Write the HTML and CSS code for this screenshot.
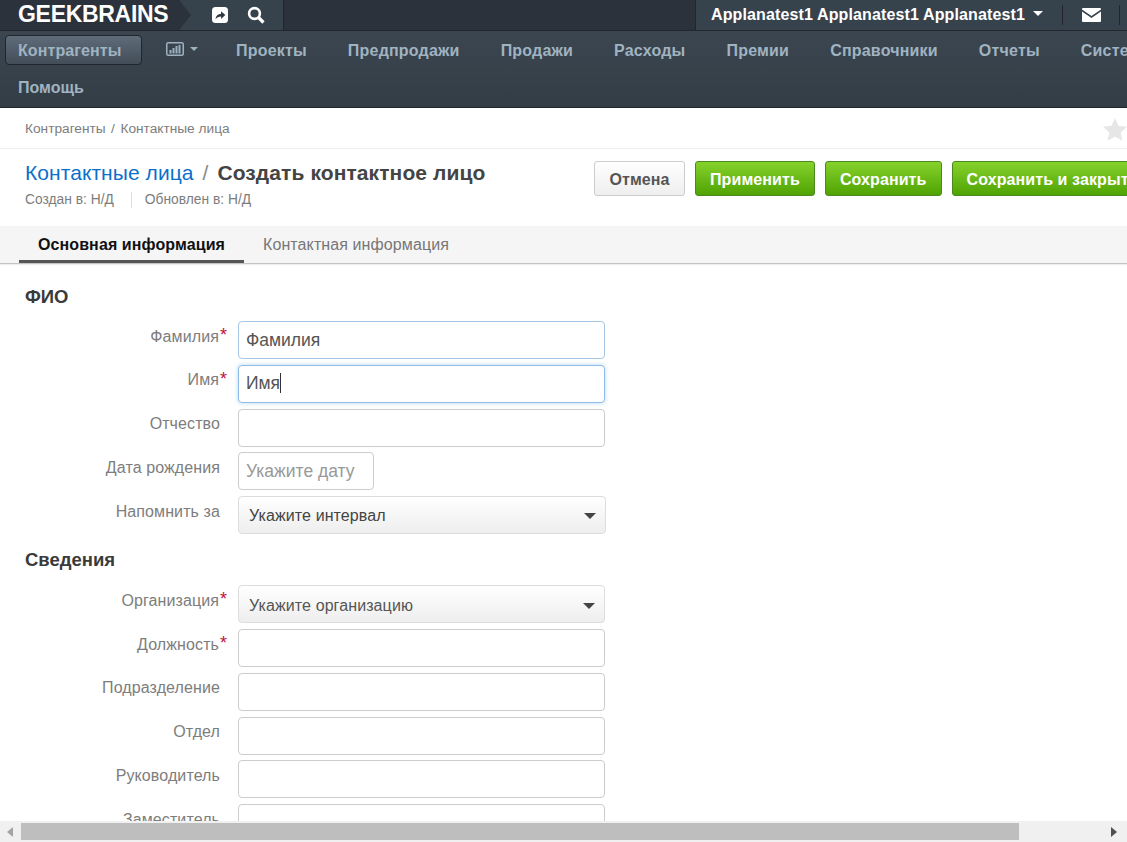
FILE: index.html
```html
<!DOCTYPE html>
<html lang="ru">
<head>
<meta charset="utf-8">
<title>Создать контактное лицо</title>
<link rel="stylesheet" href="styles.css">
</head>
<body>
<div class="viewport">
  <div class="page">
    <header class="topbar">
      <a class="logo">GEEKBRAINS</a>
      <div class="quick">
        <svg class="ico-share" width="18" height="18" viewBox="0 0 18 18"><rect x="1" y="1" width="16" height="16" rx="3.5" fill="#fff"/><path d="M4.5 13.5c.3-3.6 2.4-5.6 5.6-5.7V5.2l4.2 3.9-4.2 3.9v-2.5c-2.4 0-4.100.8-5.600 2.999z" fill="#2e3840"/></svg>
        <svg class="ico-search" width="18" height="18" viewBox="0 0 18 18"><circle cx="7.500" cy="7.500" r="5.400" fill="none" stroke="#fff" stroke-width="2.600"/><path d="M11.500 11.500l5 5" stroke="#fff" stroke-width="3.200"/></svg>
      </div>
      <div class="topgap"></div>
      <div class="user">
        <span class="user-name">Applanatest1 Applanatest1 Applanatest1</span>
        <span class="caret-white"></span>
        <span class="vsep"></span>
        <svg class="ico-mail" width="19" height="14" viewBox="0 0 19 14"><path d="M0 1.500 9.500 8 19 1.500V1q0-1-1-1H1Q0 0 0 1z" fill="#fff"/><path d="M0 3.500V13q0 1 1 1h17q1 0 1-1V3.500L9.500 10z" fill="#fff"/></svg>
        <span class="vsep"></span>
      </div>
    </header>
    <nav class="nav">
      <a class="nav-item active">Контрагенты</a>
      <a class="nav-item chart">
        <svg width="18" height="14" viewBox="0 0 18 14"><rect x=".75" y=".75" width="16.500" height="12.500" rx="1.500" fill="none" stroke="#9db2c1" stroke-width="1.500"/><path d="M3.500 8h2v3.500h-2zM6.500 6h2v5.500h-2zM9.500 4h2v7.500h-2zM12.500 3h2v8.500h-2z" fill="#9db2c1"/></svg>
        <span class="caret-nav"></span>
      </a>
      <a class="nav-item">Проекты</a>
      <a class="nav-item">Предпродажи</a>
      <a class="nav-item">Продажи</a>
      <a class="nav-item">Расходы</a>
      <a class="nav-item">Премии</a>
      <a class="nav-item">Справочники</a>
      <a class="nav-item">Отчеты</a>
      <a class="nav-item">Система</a>
      <a class="nav-item nav-help">Помощь</a>
    </nav>
    <div class="crumbs">
      <span>Контрагенты<span class="crumb-sep">/</span>Контактные лица</span>
      <svg class="star" width="24" height="23" viewBox="0 0 24 23"><path d="M12 0l3.500 7.700 8.500 1-6.300 5.700 1.700 8.400L12 18.600l-7.400 4.200 1.700-8.400L0 8.700l8.500-1z" fill="#e6e6e6"/></svg>
    </div>
    <section class="head">
      <div class="head-text">
        <h1 class="title"><a class="title-link">Контактные лица</a><span class="title-sep">/</span><b class="title-cur">Создать контактное лицо</b></h1>
        <div class="meta"><span class="meta-a">Создан в: Н/Д</span><span class="meta-b">Обновлен в: Н/Д</span></div>
      </div>
      <div class="actions">
        <button class="btn btn-cancel">Отмена</button>
        <button class="btn btn-green">Применить</button>
        <button class="btn btn-green">Сохранить</button>
        <button class="btn btn-green">Сохранить и закрыть</button>
      </div>
    </section>
    <div class="tabs">
      <a class="tab tab-active">Основная информация</a>
      <a class="tab">Контактная информация</a>
    </div>
    <form class="form">
      <h2 class="sec sec-first">ФИО</h2>
      <div class="row"><label class="lbl lbl-req">Фамилия<i class="req">*</i></label><input class="inp inp-focus" value="Фамилия"></div>
      <div class="row"><label class="lbl lbl-req">Имя<i class="req">*</i></label><div class="inp-wrap"><input class="inp inp-active" value="Имя"><span class="text-caret"></span></div></div>
      <div class="row"><label class="lbl">Отчество</label><input class="inp"></div>
      <div class="row"><label class="lbl">Дата рождения</label><input class="inp inp-date" placeholder="Укажите дату"></div>
      <div class="row"><label class="lbl">Напомнить за</label><div class="sel"><span>Укажите интервал</span><i class="sel-caret"></i></div></div>
      <h2 class="sec">Сведения</h2>
      <div class="row"><label class="lbl lbl-req">Организация<i class="req">*</i></label><div class="sel sel-org"><span>Укажите организацию</span><i class="sel-caret"></i></div></div>
      <div class="row"><label class="lbl lbl-req">Должность<i class="req">*</i></label><input class="inp"></div>
      <div class="row"><label class="lbl">Подразделение</label><input class="inp"></div>
      <div class="row"><label class="lbl">Отдел</label><input class="inp"></div>
      <div class="row"><label class="lbl">Руководитель</label><input class="inp"></div>
      <div class="row"><label class="lbl">Заместитель</label><input class="inp"></div>
    </form>
  </div>
</div>
<div class="hscroll">
  <i class="arr arr-l"></i>
  <div class="track"><div class="thumb"></div></div>
  <i class="arr arr-r"></i>
</div>
</body>
</html>
```
FILE: styles.css
```css
* { box-sizing: border-box; }
html, body { margin: 0; height: 100%; overflow: hidden; }
body { display: flex; flex-direction: column; background: #fff; font-family: "Liberation Sans", Arial, sans-serif; color: #444; }
.viewport { flex: 1; min-height: 0; overflow: hidden; }
.page { width: 1225px; }

.topbar { display: flex; height: 31px; background: #2b323b; border-bottom: 1px solid #20262c; }
.logo { position: relative; width: 180px; padding-left: 18px; color: #fff; font-size: 23px; font-weight: 700; line-height: 28px; letter-spacing: -.3px; background: #2b323b; z-index: 1; }
.logo::after { content: ""; position: absolute; right: -11px; top: 0; width: 0; height: 0; border-style: solid; border-width: 15px 0 15px 12px; border-color: transparent transparent transparent #2b323b; }
.quick { width: 104px; display: flex; align-items: center; gap: 18px; padding-left: 31px; background: #36424c; border-right: 1px solid #20262c; }
.topgap { width: 411px; }
.user { flex: 1; display: flex; align-items: center; background: #36424c; border-left: 1px solid #20262c; padding-left: 15px; }
.user-name { color: #fff; font-size: 16px; font-weight: 700; letter-spacing: .13px; }
.caret-white { margin: 0 0 3px 8px; border-style: solid; border-width: 5px 5.500px 0; border-color: #fff transparent transparent; }
.vsep { width: 1px; height: 20px; background: #20262c; margin-left: 19px; }
.ico-mail { margin-left: 19px; margin-right: -1px; }

.nav { display: flex; flex-wrap: wrap; align-items: flex-start; align-content: flex-start; height: 77px; padding: 4px 0 0 5px; background: linear-gradient(#3b4650, #323d46); border-bottom: 1px solid #20262c; }
.nav-item { height: 30px; line-height: 31px; padding: 0 20px; margin-right: 1px; color: #a0b3c1; font-size: 16px; font-weight: 700; letter-spacing: .2px; white-space: nowrap; }
.nav-item.active { width: 137px; padding: 0 0 0 12px; margin-right: 4px; border: 1px solid #20262c; border-radius: 4px; background: linear-gradient(#5f6c79, #424d58); line-height: 29px; letter-spacing: .1px; }
.nav-item.chart { display: flex; align-items: center; gap: 6px; padding: 0 17px 3px 20px; margin-right: 1px; }
.caret-nav { border-style: solid; border-width: 4px 4.500px 0; border-color: #9db2c1 transparent transparent; }
.nav-help { margin: 7px 0 0 -5px; padding-left: 18px; letter-spacing: 0; }

.crumbs { display: flex; justify-content: space-between; align-items: center; height: 41px; padding: 0 98px 0 25px; border-bottom: 1px solid #eee; font-size: 13.700px; color: #7d7d7d; }
.crumb-sep { margin: 0 5.500px; }
.star { margin-top: 2px; }

.head { display: flex; height: 77px; padding: 12px 0 0 25px; }
.head-text { width: 569px; }
.title { margin: 0; font-size: 21px; font-weight: 400; line-height: 23px; white-space: nowrap; }
.title-link { color: #0c6fcb; letter-spacing: .07px; }
.title-sep { margin: 0 9px; color: #888; }
.title-cur { font-weight: 700; color: #444; letter-spacing: .1px; }
.meta { display: flex; margin-top: 8px; font-size: 13.800px; color: #7d7d7d; line-height: 16px; }
.meta-a { padding-right: 17px; border-right: 1px solid #ddd; }
.meta-b { padding-left: 13px; }
.actions { display: flex; gap: 10px; height: 35px; }
.btn { height: 35px; padding: 2px 14px 0; border-radius: 3px; font: 700 16px/1 "Liberation Sans", Arial, sans-serif; letter-spacing: .1px; white-space: nowrap; }
.btn-cancel { width: 91px; padding: 2px 0 0; border: 1px solid #ccc; background: linear-gradient(#fff, #eee); color: #555; }
.btn-green { border: 1px solid #4a8a1c; background: linear-gradient(#86d22d, #4fa302); color: #fff; }

.tabs { display: flex; height: 38px; padding-left: 19px; background: #f5f5f5; border-bottom: 1px solid #c4c4c4; box-shadow: 0 1px 1px #eee; }
.tab { height: 37px; padding: 0 19px; font-size: 16px; line-height: 37px; letter-spacing: .1px; color: #777; white-space: nowrap; }
.tab-active { width: 225px; color: #111; font-weight: 700; border-bottom: 3px solid #555; }

.form { padding-left: 25px; }
.sec { margin: 0; font-size: 18.500px; font-weight: 700; color: #3a3a3a; line-height: 20px; }
.sec-first { height: 57px; padding-top: 23px; }
.sec:not(.sec-first) { margin-top: 9px; height: 42px; padding-top: 7px; }
.row { display: flex; height: 38px; margin-bottom: 5.800px; }
.lbl { width: 195px; padding-top: 5.700px; text-align: right; font-size: 16px; letter-spacing: .1px; line-height: 20px; color: #7d7d7d; white-space: nowrap; position: relative; }
.lbl-req { padding-right: 1px; }
.req { position: absolute; left: 195px; top: 4px; color: #c2113a; font-style: normal; font-size: 18px; }
.inp-wrap { position: relative; margin-left: 18px; }
.inp { width: 367px; height: 38px; margin-left: 18px; padding: 0 7px; border: 1px solid #ccc; border-radius: 4px; outline: 0; background: #fff; font: 17.500px "Liberation Sans", Arial, sans-serif; color: #555; }
.inp-wrap .inp { margin-left: 0; }
.inp-focus { border-color: #a6c6e6; }
.inp-active { border-color: #8fbde8; box-shadow: 0 0 4px rgba(102,175,233,.5); }
.inp-date { width: 136px; }
.inp::placeholder { color: #999; }
.text-caret { position: absolute; left: 42px; top: 8px; width: 1px; height: 20px; background: #333; }
.sel { display: flex; justify-content: space-between; align-items: center; width: 368px; height: 38px; margin-left: 18px; padding: 1px 10px 0; border: 1px solid #ddd; border-radius: 4px; background: linear-gradient(#fff, #eee); font-size: 16px; letter-spacing: .1px; color: #444; }
.sel-org { width: 367px; color: #555; padding-top: 3px; }
.sel-caret { border-style: solid; border-width: 6px 6px 0; border-color: #444 transparent transparent; margin-right: -1px; }

.hscroll { display: flex; align-items: center; height: 21px; flex: none; background: #f0f0f0; }
.arr { flex: none; width: 0; height: 0; border-style: solid; }
.arr-l { margin: 0 8px 0 7px; border-width: 5px 6px 5px 0; border-color: transparent #a3a3a3 transparent transparent; }
.arr-r { margin: 0 10px 0 8px; border-width: 5px 0 5px 6px; border-color: transparent transparent transparent #505050; }
.track { flex: 1; height: 17px; }
.thumb { width: 998px; height: 100%; background: #bebebe; }
```
